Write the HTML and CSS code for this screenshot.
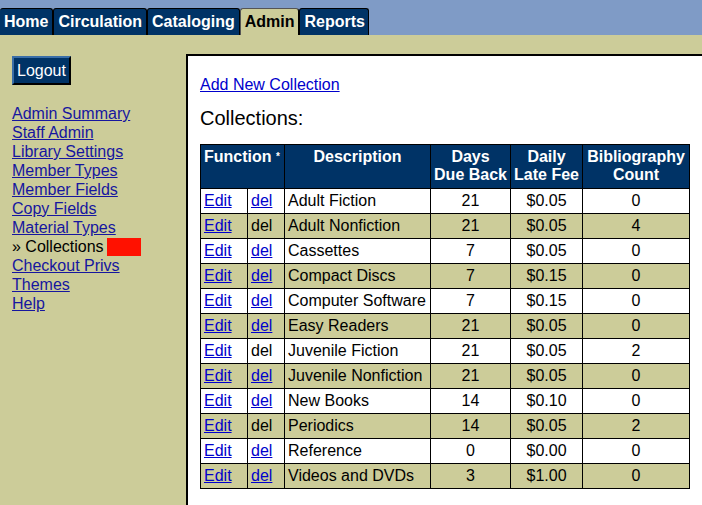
FILE: index.html
```html
<!DOCTYPE html>
<html>
<head>
<meta charset="utf-8">
<title>Admin - Collections</title>
<link rel="stylesheet" href="styles.css">
</head>
<body>
<div class="tabbar">
  <a class="tab" href="#">Home</a>
  <a class="tab" href="#">Circulation</a>
  <a class="tab" href="#">Cataloging</a>
  <a class="tab active" href="#">Admin</a>
  <a class="tab" href="#">Reports</a>
</div>
<div class="layout">
  <aside class="sidebar">
    <button class="logout" type="button">Logout</button>
    <nav class="nav">
      <a href="#">Admin Summary</a>
      <a href="#">Staff Admin</a>
      <a href="#">Library Settings</a>
      <a href="#">Member Types</a>
      <a href="#">Member Fields</a>
      <a href="#">Copy Fields</a>
      <a href="#">Material Types</a>
      <span class="current">» Collections<span class="marker"></span></span>
      <a href="#">Checkout Privs</a>
      <a href="#">Themes</a>
      <a href="#">Help</a>
    </nav>
  </aside>
  <main class="content">
    <a class="addlink" href="#">Add New Collection</a>
    <h1 class="title">Collections:</h1>
    <table class="grid">
      <colgroup>
        <col class="c-edit"><col class="c-del"><col class="c-desc"><col class="c-days"><col class="c-fee"><col class="c-count">
      </colgroup>
      <thead>
        <tr>
          <th colspan="2" class="left">Function <sup>*</sup></th>
          <th>Description</th>
          <th>Days<br>Due Back</th>
          <th>Daily<br>Late Fee</th>
          <th>Bibliography<br>Count</th>
        </tr>
      </thead>
      <tbody>
        <tr><td><a href="#">Edit</a></td><td><a href="#">del</a></td><td>Adult Fiction</td><td class="num">21</td><td class="num">$0.05</td><td class="num">0</td></tr>
        <tr class="alt"><td><a href="#">Edit</a></td><td>del</td><td>Adult Nonfiction</td><td class="num">21</td><td class="num">$0.05</td><td class="num">4</td></tr>
        <tr><td><a href="#">Edit</a></td><td><a href="#">del</a></td><td>Cassettes</td><td class="num">7</td><td class="num">$0.05</td><td class="num">0</td></tr>
        <tr class="alt"><td><a href="#">Edit</a></td><td><a href="#">del</a></td><td>Compact Discs</td><td class="num">7</td><td class="num">$0.15</td><td class="num">0</td></tr>
        <tr><td><a href="#">Edit</a></td><td><a href="#">del</a></td><td>Computer Software</td><td class="num">7</td><td class="num">$0.15</td><td class="num">0</td></tr>
        <tr class="alt"><td><a href="#">Edit</a></td><td><a href="#">del</a></td><td>Easy Readers</td><td class="num">21</td><td class="num">$0.05</td><td class="num">0</td></tr>
        <tr><td><a href="#">Edit</a></td><td>del</td><td>Juvenile Fiction</td><td class="num">21</td><td class="num">$0.05</td><td class="num">2</td></tr>
        <tr class="alt"><td><a href="#">Edit</a></td><td><a href="#">del</a></td><td>Juvenile Nonfiction</td><td class="num">21</td><td class="num">$0.05</td><td class="num">0</td></tr>
        <tr><td><a href="#">Edit</a></td><td><a href="#">del</a></td><td>New Books</td><td class="num">14</td><td class="num">$0.10</td><td class="num">0</td></tr>
        <tr class="alt"><td><a href="#">Edit</a></td><td>del</td><td>Periodics</td><td class="num">14</td><td class="num">$0.05</td><td class="num">2</td></tr>
        <tr><td><a href="#">Edit</a></td><td><a href="#">del</a></td><td>Reference</td><td class="num">0</td><td class="num">$0.00</td><td class="num">0</td></tr>
        <tr class="alt"><td><a href="#">Edit</a></td><td><a href="#">del</a></td><td>Videos and DVDs</td><td class="num">3</td><td class="num">$1.00</td><td class="num">0</td></tr>
      </tbody>
    </table>
  </main>
</div>
</body>
</html>
```

FILE: styles.css
```css
html, body {
  margin: 0;
  padding: 0;
}
body {
  background: #cccc99;
  font-family: "Liberation Sans", Arial, sans-serif;
  font-size: 16px;
  color: #000;
  overflow: hidden;
  width: 702px;
  height: 505px;
}

/* Tabs */
.tabbar {
  background: #7f9bc6;
  height: 35px;
  padding-top: 8px;
  box-sizing: border-box;
  display: flex;
  align-items: flex-end;
}
.tab {
  display: block;
  background: #003366;
  color: #fff;
  font-weight: bold;
  text-decoration: none;
  line-height: 18px;
  padding: 4px 4px 4px 4px;
  border: 1px solid #000;
  border-bottom: none;
  border-radius: 3px 3px 0 0;
}
.tab:first-child {
  border-left: none;
  padding-left: 4px;
}
.tab:last-child {
  padding-right: 3px;
}
.tab.active {
  background: #cccc99;
  color: #000;
  border-color: #555;
  border-right-color: #000;
}

/* Layout */
.layout {
  display: flex;
  align-items: flex-start;
}
.sidebar {
  width: 186px;
  flex: none;
  box-sizing: border-box;
  padding: 21px 0 0 12px;
}
.logout {
  display: block;
  font-family: "Liberation Sans", Arial, sans-serif;
  font-size: 16px;
  line-height: 18px;
  color: #fff;
  background: #003366;
  padding: 4px 3px 3px 3px;
  border: 2px solid;
  border-color: #3a6ea8 #000 #000 #3a6ea8;
  margin: 0;
  cursor: pointer;
}
.nav {
  display: flex;
  flex-direction: column;
  align-items: flex-start;
  margin-top: 19px;
  line-height: 19px;
}
.nav a {
  color: #16169f;
}
.current {
  display: flex;
  align-items: flex-start;
}
.marker {
  display: inline-block;
  width: 34px;
  height: 18px;
  margin-left: 3px;
  margin-top: 1px;
  background: #ff1100;
}

/* Content */
.content {
  margin-top: 19px;
  background: #fff;
  border: 2px solid #000;
  border-right: none;
  border-bottom: none;
  width: 560px;
  min-height: 500px;
  flex: none;
  padding: 20px 0 0 12px;
  box-sizing: border-box;
}
.addlink {
  display: inline-block;
  color: #0000cc;
  line-height: 18px;
}
.title {
  font-size: 20px;
  font-weight: normal;
  line-height: 23px;
  margin: 13px 0 14px 0;
}

/* Table */
.grid {
  border-collapse: collapse;
  table-layout: fixed;
  width: 489px;
}
.c-edit { width: 47px; }
.c-del { width: 37px; }
.c-desc { width: 146px; }
.c-days { width: 80px; }
.c-fee { width: 72px; }
.c-count { width: 107px; }
.grid th, .grid td {
  border: 1px solid #000;
  padding: 3px 3px;
  line-height: 18px;
  white-space: nowrap;
  overflow: hidden;
}
.grid th {
  background: #003366;
  color: #fff;
  font-weight: bold;
  vertical-align: top;
  text-align: center;
  padding-bottom: 4px;
}
.grid th.left {
  text-align: left;
}
.grid sup {
  font-size: 10px;
  line-height: 0;
  vertical-align: 2px;
}
.grid td {
  text-align: left;
  height: 18px;
}
.grid td.num {
  text-align: center;
}
.grid td a {
  color: #0000cc;
}
.grid tr.alt td {
  background: #cccc99;
}
```
